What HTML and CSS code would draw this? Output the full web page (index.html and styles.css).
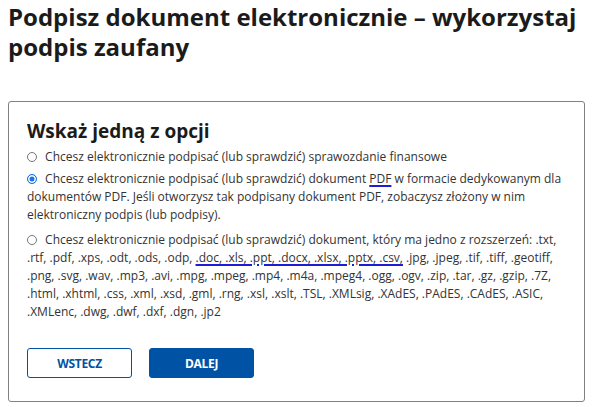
FILE: index.html
```html
<!DOCTYPE html>
<html lang="pl">
<head>
    <meta charset="UTF-8">
    <meta name="viewport" content="width=device-width, initial-scale=1.0">
    <title>Podpisz dokument elektronicznie</title>
    <link rel="stylesheet" href="styles.css">
</head>
<body>

<h1>Podpisz dokument elektronicznie – wykorzystaj podpis zaufany</h1>

<form class="box" onsubmit="return false;">
    <h2>Wskaż jedną z opcji</h2>

    <label class="option">
        <input type="radio" name="opcja" value="sprawozdanie">
        Chcesz elektronicznie podpisać (lub sprawdzić) sprawozdanie finansowe
    </label>

    <label class="option option-pdf">
        <input type="radio" name="opcja" value="pdf" checked>
        Chcesz elektronicznie podpisać (lub sprawdzić) dokument <span class="mark">PDF</span> w formacie dedykowanym dla dokumentów PDF. Jeśli otworzysz tak podpisany dokument PDF, zobaczysz złożony w nim elektroniczny podpis (lub podpisy).
    </label>

    <label class="option">
        <input type="radio" name="opcja" value="inny">
        Chcesz elektronicznie podpisać (lub sprawdzić) dokument, który ma jedno z rozszerzeń: .txt, .rtf, .pdf, .xps, .odt, .ods, .odp, <span class="mark">.doc, .xls, .ppt, .docx, .xlsx, .pptx, .csv,</span> .jpg, .jpeg, .tif, .tiff, .geotiff, .png, .svg, .wav, .mp3, .avi, .mpg, .mpeg, .mp4, .m4a, .mpeg4, .ogg, .ogv, .zip, .tar, .gz, .gzip, .7Z, .html, .xhtml, .css, .xml, .xsd, .gml, .rng, .xsl, .xslt, .TSL, .XMLsig, .XAdES, .PAdES, .CAdES, .ASIC, .XMLenc, .dwg, .dwf, .dxf, .dgn, .jp2
    </label>

    <div class="buttons">
        <button type="button" class="btn btn-back">Wstecz</button>
        <button type="button" class="btn btn-next">Dalej</button>
    </div>
</form>

</body>
</html>
```

FILE: styles.css
```css
body {
    font-family: 'Open Sans', sans-serif;
    margin: 0;
    padding: 0 8px;
    color: #1b1b1b;
    background: #ffffff;
}
h1 {
    font-size: 24px;
    line-height: 30px;
    font-weight: 700;
    margin: 2px 0 0;
}
.box {
    margin-top: 39px;
    border: 1px solid #808080;
    border-radius: 3px;
    padding: 16px 17px 23px 18px;
}
h2 {
    font-size: 19px;
    line-height: 26px;
    font-weight: 700;
    margin: 0 0 4px;
}
.option {
    display: block;
    font-size: 12px;
    line-height: 18px;
    color: #333;
    margin-bottom: 4px;
    cursor: pointer;
}
.option-pdf {
    margin-bottom: 7px;
}
.option input {
    appearance: none;
    width: 10px;
    height: 10px;
    margin: 0 5px 0 0;
    border: 1px solid #767676;
    border-radius: 50%;
    box-sizing: border-box;
    vertical-align: -1px;
}
.option input:checked {
    border-color: #1a73e8;
    background: #1a73e8;
    box-shadow: inset 0 0 0 1.5px #ffffff;
}
.mark {
    text-decoration: underline;
    text-decoration-color: #1d1dd8;
    text-decoration-thickness: 1.5px;
    text-underline-offset: 2px;
}
.buttons {
    display: flex;
    gap: 17px;
    margin-top: 27px;
}
.btn {
    width: 105px;
    height: 30px;
    border: 1px solid #0052a5;
    border-radius: 3px;
    font-family: 'Open Sans', sans-serif;
    font-size: 12px;
    font-weight: 700;
    text-transform: uppercase;
    letter-spacing: -0.3px;
    cursor: pointer;
}
.btn-back {
    background: #ffffff;
    color: #0052a5;
}
.btn-next {
    background: #0052a5;
    color: #ffffff;
}
```
